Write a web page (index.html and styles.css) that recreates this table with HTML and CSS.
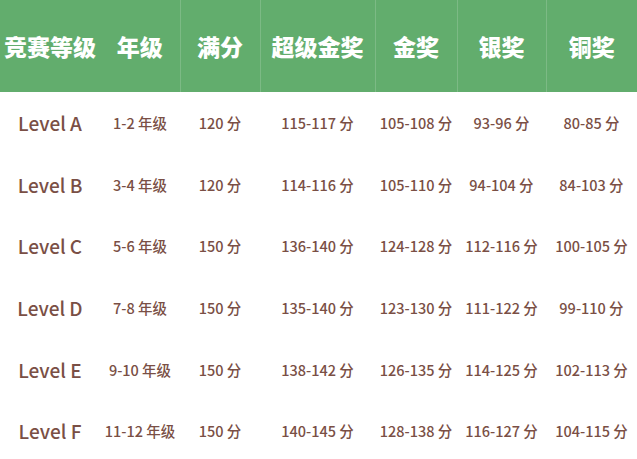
FILE: index.html
```html
<!DOCTYPE html>
<html lang="zh">
<head>
<meta charset="utf-8">
<link rel="stylesheet" href="styles.css">
</head>
<body>
<table class="scores">
  <colgroup>
    <col class="c1"><col class="c2"><col class="c3"><col class="c4"><col class="c5"><col class="c6"><col class="c7">
  </colgroup>
  <thead>
    <tr>
      <th>竞赛等级</th>
      <th>年级</th>
      <th class="sep">满分</th>
      <th class="sep">超级金奖</th>
      <th class="sep">金奖</th>
      <th class="sep">银奖</th>
      <th class="sep">铜奖</th>
    </tr>
  </thead>
  <tbody>
    <tr><td class="lvl">Level A</td><td>1-2 年级</td><td>120 分</td><td>115-117 分</td><td>105-108 分</td><td>93-96 分</td><td>80-85 分</td></tr>
    <tr><td class="lvl">Level B</td><td>3-4 年级</td><td>120 分</td><td>114-116 分</td><td>105-110 分</td><td>94-104 分</td><td>84-103 分</td></tr>
    <tr><td class="lvl">Level C</td><td>5-6 年级</td><td>150 分</td><td>136-140 分</td><td>124-128 分</td><td>112-116 分</td><td>100-105 分</td></tr>
    <tr><td class="lvl">Level D</td><td>7-8 年级</td><td>150 分</td><td>135-140 分</td><td>123-130 分</td><td>111-122 分</td><td>99-110 分</td></tr>
    <tr><td class="lvl">Level E</td><td>9-10 年级</td><td>150 分</td><td>138-142 分</td><td>126-135 分</td><td>114-125 分</td><td>102-113 分</td></tr>
    <tr><td class="lvl">Level F</td><td>11-12 年级</td><td>150 分</td><td>140-145 分</td><td>128-138 分</td><td>116-127 分</td><td>104-115 分</td></tr>
  </tbody>
</table>
</body>
</html>
```

FILE: styles.css
```css
html, body {
  margin: 0;
  padding: 0;
  background: #ffffff;
  overflow: hidden;
}

.scores {
  width: 637px;
  border-collapse: collapse;
  table-layout: fixed;
  font-family: "Noto Sans CJK SC", "Noto Sans", sans-serif;
}

.c1 { width: 100px; }
.c2 { width: 80px; }
.c3 { width: 80px; }
.c4 { width: 115px; }
.c5 { width: 82px; }
.c6 { width: 89px; }
.c7 { width: 91px; }

.scores th {
  height: 92px;
  padding: 0;
  background: #62ad6d;
  color: #ffffff;
  font-size: 23px;
  font-weight: 900;
  text-align: center;
  vertical-align: middle;
  white-space: nowrap;
}

.scores th.sep {
  border-left: 1px solid #7cba85;
}

.scores td {
  height: 61.6px;
  padding: 0;
  color: #7a4f45;
  font-size: 14.5px;
  font-weight: 500;
  text-align: center;
  vertical-align: middle;
  white-space: nowrap;
}

.scores td.lvl {
  font-size: 19px;
  font-weight: 500;
}
```
